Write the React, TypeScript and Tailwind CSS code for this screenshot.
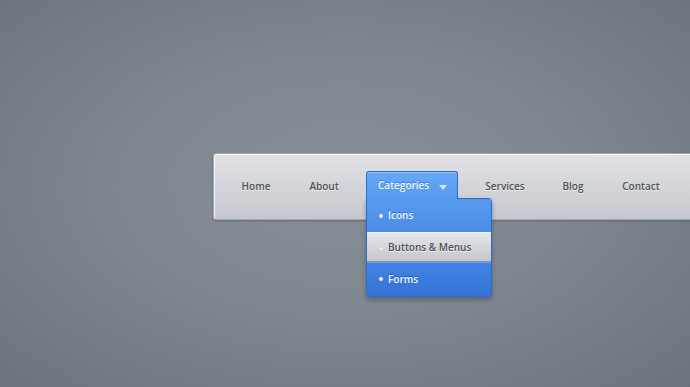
import React from "react";

const font = { fontFamily: '"Open Sans", "Liberation Sans", sans-serif' };

function NavLink({ label }: { label: string }) {
  return (
    <li className="w-[68px] flex justify-center text-[10px] font-semibold text-[#4c4f56] [text-shadow:0_1px_0_rgba(255,255,255,0.7)]">
      {label}
    </li>
  );
}

function Bullet({ light }: { light?: boolean }) {
  return (
    <span
      className={
        light
          ? "w-[4px] h-[4px] rounded-full bg-[#d9dbe0] shadow-[0_1px_0_rgba(255,255,255,0.8)]"
          : "w-[4px] h-[4px] rounded-full bg-[#e8f2ff]"
      }
    />
  );
}

export default function App() {
  return (
    <div
      style={font}
      className="w-[690px] h-[387px] overflow-hidden bg-[radial-gradient(ellipse_at_50%_48%,#878e98_0%,#7f8790_45%,#6b737c_100%)] pt-[153px] pl-[213px]"
    >
      {/* menu bar */}
      <nav className="h-[67px] w-[520px] rounded-l-[3px] border border-r-0 border-[#a3a7ad] bg-gradient-to-b from-[#e1e2e6] to-[#c6c8ce] shadow-[inset_1px_1px_0_rgba(255,255,255,0.8),0_1px_2px_rgba(40,45,55,0.35)]">
        <ul className="flex items-start pl-[8px] pt-[17px]">
          <li className="w-[68px] pt-[8px] flex justify-center text-[10px] font-semibold text-[#4c4f56] [text-shadow:0_1px_0_rgba(255,255,255,0.7)]">
            Home
          </li>
          <li className="w-[68px] pt-[8px] flex justify-center text-[10px] font-semibold text-[#4c4f56] [text-shadow:0_1px_0_rgba(255,255,255,0.7)]">
            About
          </li>

          {/* active tab with dropdown */}
          <li className="relative ml-[8px] w-[92px]">
            <div className="relative z-20 h-[28px] rounded-t-[3px] border border-b-0 border-[#2f6cc0] bg-gradient-to-b from-[#66a9f6] to-[#559aee] shadow-[inset_0_1px_0_rgba(255,255,255,0.3)] flex items-center pl-[11px]">
              <span className="text-[10px] font-semibold text-[#f2f7ff] [text-shadow:0_-1px_0_rgba(30,80,160,0.5)]">
                Categories
              </span>
              <svg className="ml-[10px] mt-[3px]" width="8" height="5" viewBox="0 0 8 5">
                <path d="M0 0 H8 L4 5 Z" fill="#d6e7fc" />
              </svg>
            </div>
            <div className="absolute z-10 left-0 top-[27px] w-[126px] rounded-b-[3px] rounded-tr-[3px] border border-[#2f6cc0] overflow-hidden shadow-[0_3px_5px_rgba(30,40,60,0.35)]">
              <div className="h-[33px] bg-gradient-to-b from-[#579bee] to-[#4b8ce7] flex items-center gap-[5px] pl-[12px] text-[10px] font-semibold text-[#f2f7ff] [text-shadow:0_-1px_0_rgba(30,80,160,0.5)]">
                <Bullet />
                Icons
              </div>
              <div className="h-[30px] border-t border-[#f4f5f7] border-b border-b-[#8f939a] bg-gradient-to-b from-[#e4e5e8] to-[#c5c7cc] flex items-center gap-[5px] pl-[12px] text-[10px] font-semibold text-[#4c4f56] [text-shadow:0_1px_0_rgba(255,255,255,0.7)]">
                <Bullet light />
                Buttons &amp; Menus
              </div>
              <div className="h-[34px] border-t border-[#5f9cf0] bg-gradient-to-b from-[#4183e2] to-[#3673d8] flex items-center gap-[5px] pl-[12px] pb-[1px] text-[10px] font-semibold text-[#f2f7ff] [text-shadow:0_-1px_0_rgba(20,60,140,0.6)]">
                <Bullet />
                Forms
              </div>
            </div>
          </li>

          <li className="ml-[13px] flex pt-[8px]">
            <NavLink label="Services" />
            <NavLink label="Blog" />
            <NavLink label="Contact" />
          </li>
        </ul>
      </nav>
    </div>
  );
}
